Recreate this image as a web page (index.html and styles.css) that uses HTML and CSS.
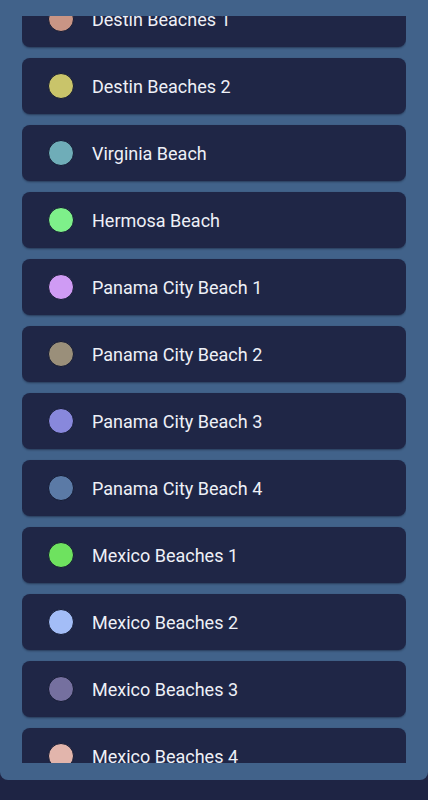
FILE: index.html
```html
<!DOCTYPE html>
<html lang="en">

<head>
    <meta charset="UTF-8">
    <meta name="viewport" content="width=device-width, initial-scale=1.0">
    <title>Beaches</title>
    <link rel="stylesheet" href="styles.css">
</head>

<body>
    <div class="panel">
        <div class="scroll">
            <ul class="list">
                <li class="item"><i class="dot" style="background:#c99585"></i><span>Destin Beaches 1</span></li>
                <li class="item"><i class="dot" style="background:#c9c46a"></i><span>Destin Beaches 2</span></li>
                <li class="item"><i class="dot" style="background:#6fadb8"></i><span>Virginia Beach</span></li>
                <li class="item"><i class="dot" style="background:#7ef08a"></i><span>Hermosa Beach</span></li>
                <li class="item"><i class="dot" style="background:#cf9bf4"></i><span>Panama City Beach 1</span></li>
                <li class="item"><i class="dot" style="background:#9a8f7a"></i><span>Panama City Beach 2</span></li>
                <li class="item"><i class="dot" style="background:#8888dc"></i><span>Panama City Beach 3</span></li>
                <li class="item"><i class="dot" style="background:#5b7aa6"></i><span>Panama City Beach 4</span></li>
                <li class="item"><i class="dot" style="background:#6ee25f"></i><span>Mexico Beaches 1</span></li>
                <li class="item"><i class="dot" style="background:#a3bdf7"></i><span>Mexico Beaches 2</span></li>
                <li class="item"><i class="dot" style="background:#75709f"></i><span>Mexico Beaches 3</span></li>
                <li class="item"><i class="dot" style="background:#e2b5ac"></i><span>Mexico Beaches 4</span></li>
            </ul>
        </div>
    </div>
</body>

</html>
```

FILE: styles.css
```css
* {
    margin: 0;
    padding: 0;
    box-sizing: border-box;
}

html,
body {
    height: 100%;
}

body {
    background: #1e2444;
    font-family: Roboto, "Noto Sans", sans-serif;
    overflow: hidden;
}

.panel {
    height: 780px;
    background: #41628a;
    border-radius: 0 0 8px 8px;
    padding: 16px 22px 0;
}

.scroll {
    height: 747px;
    overflow: hidden;
}

.list {
    list-style: none;
    display: flex;
    flex-direction: column;
    gap: 11px;
    margin-top: -25px;
}

.item {
    height: 56px;
    flex-shrink: 0;
    display: flex;
    align-items: center;
    gap: 18px;
    padding-left: 26px;
    background: #1f2646;
    border-radius: 8px;
    box-shadow: 0 1px 2px rgba(10, 14, 30, .45);
    color: #eef0f7;
    font-size: 18px;
}

.dot {
    width: 26px;
    height: 26px;
    border-radius: 50%;
    border: 1px solid #141a33;
    flex-shrink: 0;
}
```
